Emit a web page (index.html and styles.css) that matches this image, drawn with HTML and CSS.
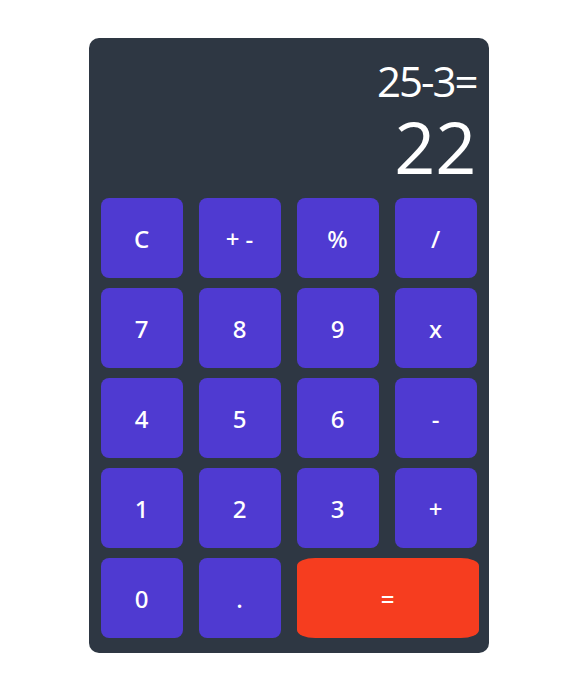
FILE: index.html
```html
<!DOCTYPE html>
<html lang="en">
<head>
<meta charset="utf-8">
<title>Calculator</title>
<link rel="stylesheet" href="styles.css">
</head>
<body>
<div class="calc">
  <div class="display">
    <div class="expr">25-3=</div>
    <div class="result">22</div>
  </div>
  <div class="keys">
    <button class="key">C</button>
    <button class="key">+ -</button>
    <button class="key">%</button>
    <button class="key">/</button>
    <button class="key">7</button>
    <button class="key">8</button>
    <button class="key">9</button>
    <button class="key">x</button>
    <button class="key">4</button>
    <button class="key">5</button>
    <button class="key">6</button>
    <button class="key">-</button>
    <button class="key">1</button>
    <button class="key">2</button>
    <button class="key">3</button>
    <button class="key">+</button>
    <button class="key">0</button>
    <button class="key">.</button>
    <button class="key equals">=</button>
  </div>
</div>
</body>
</html>
```
FILE: styles.css
```css
html, body {
  margin: 0;
  padding: 0;
  background: #ffffff;
}
body {
  font-family: "Open Sans", "Noto Sans", sans-serif;
  display: flex;
  justify-content: center;
  padding-top: 38px;
}
.calc {
  width: 400px;
  box-sizing: border-box;
  background: #2e3743;
  border-radius: 10px;
  padding: 22px 12px 15px 12px;
}
.display {
  display: flex;
  flex-direction: column;
  align-items: flex-end;
  color: #ffffff;
  padding-bottom: 16px;
}
.expr {
  font-size: 42px;
  line-height: 42px;
  letter-spacing: -2px;
}
.result {
  font-size: 72px;
  line-height: 72px;
  margin-top: 8px;
}
.keys {
  display: grid;
  grid-template-columns: repeat(4, 82px);
  grid-auto-rows: 80px;
  column-gap: 16px;
  row-gap: 10px;
}
.key {
  border: none;
  margin: 0;
  padding: 0;
  background: #4f3ad1;
  color: #ffffff;
  font-family: "Noto Sans", "Open Sans", sans-serif;
  font-size: 24px;
  font-weight: 500;
  border-radius: 10%;
  cursor: pointer;
}
.equals {
  grid-column: span 2;
  width: 182px;
  background: #f63d1f;
}
```
